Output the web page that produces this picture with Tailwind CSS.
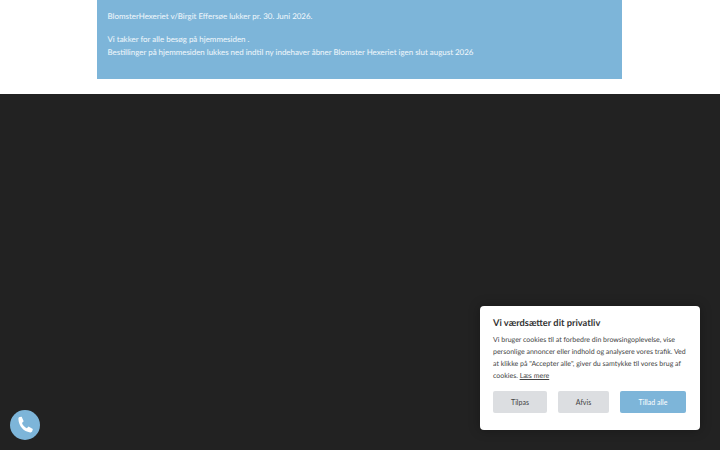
<!DOCTYPE html>
<html lang="da">
<head>
<meta charset="utf-8">
<script src="https://cdn.jsdelivr.net/npm/@tailwindcss/browser@4"></script>
</head>
<body class="relative w-[720px] h-[450px] overflow-hidden bg-[#222222] font-['Lato','Liberation_Sans',sans-serif] [text-rendering:geometricPrecision]">
<header class="bg-white h-[94px]">
  <div class="ml-[97px] w-[525px] h-[79px] bg-[#7db5d9] px-[10.500px] pt-[10px] text-[7.950px] leading-[13px] text-white/90">
    <p class="mb-[10px]">BlomsterHexeriet v/Birgit Effersøe lukker pr. 30. Juni 2026.</p>
    <p>Vi takker for alle besøg på hjemmesiden .</p>
    <p>Bestillinger på hjemmesiden lukkes ned indtil ny indehaver åbner Blomster Hexeriet igen slut august 2026</p>
  </div>
</header>
<button class="absolute left-[10px] top-[410px] w-[30px] h-[30px] rounded-full bg-[#7db5d9] flex items-center justify-center">
  <svg class="w-[20px] h-[20px]" viewBox="0 0 24 24" fill="#fff"><path d="M5.500 2.500 8 2l2.400 5.600-2 2c1 2.900 3 5 5.800 6.200l2-2 5.200 3-.6 2.500c-.3 1.200-1.400 1.900-2.600 1.700C10.200 19.800 4.600 13.500 4.100 5.200c-.1-1.300.3-2.400 1.400-2.700z"/></svg>
</button>
<div class="absolute left-[480px] top-[306px] w-[220px] h-[124px] rounded-[4px] bg-white px-[13px] pt-[10px] shadow-[0_0_12px_rgba(0,0,0,0.3)]">
  <h2 class="text-[9.300px] leading-[13px] font-bold text-[#333333]">Vi værdsætter dit privatliv</h2>
  <p class="mt-[5px] text-[7px] leading-[12px] text-[#444444]">Vi bruger cookies til at forbedre din browsingoplevelse, vise personlige annoncer eller indhold og analysere vores trafik. Ved at klikke på "Accepter alle", giver du samtykke til vores brug af cookies. <a class="underline">Læs mere</a></p>
  <div class="mt-[9px] flex gap-[11px] text-[7px]">
    <button class="w-[54px] h-[22px] rounded-[2px] bg-[#dcdee1] text-[#444444]">Tilpas</button>
    <button class="w-[51px] h-[22px] rounded-[2px] bg-[#dcdee1] text-[#444444]">Afvis</button>
    <button class="w-[66px] h-[22px] rounded-[2px] bg-[#7db5d9] text-white">Tillad alle</button>
  </div>
</div>
</body>
</html>
